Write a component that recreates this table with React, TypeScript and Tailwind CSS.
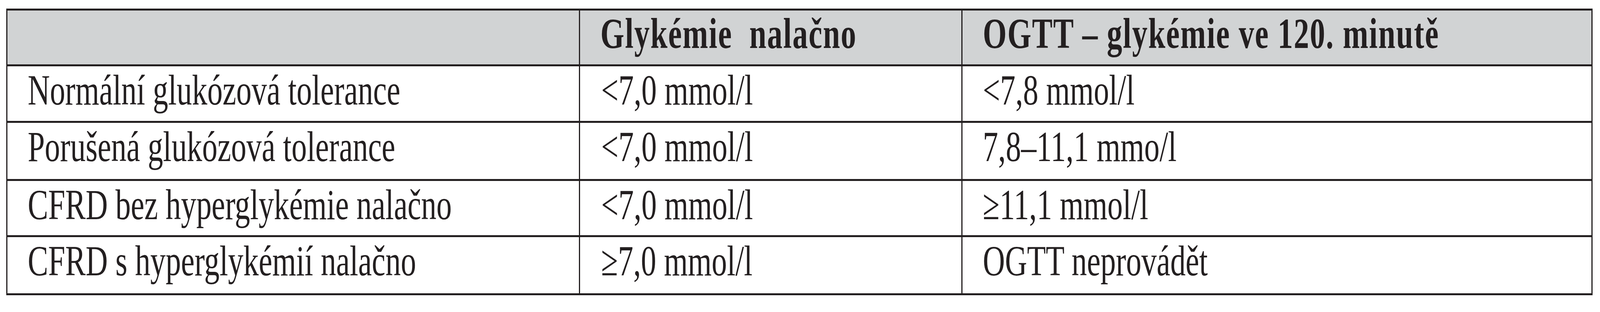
import React from "react";

interface Row {
  label: string;
  fasting: string;
  ogtt: string;
  height: string;
}

const rows: Row[] = [
  { label: "Normální glukózová tolerance", fasting: "<7,0 mmol/l", ogtt: "<7,8 mmol/l", height: "h-[145px]" },
  { label: "Porušená glukózová tolerance", fasting: "<7,0 mmol/l", ogtt: "7,8–11,1 mmo/l", height: "h-[149px]" },
  { label: "CFRD bez hyperglykémie nalačno", fasting: "<7,0 mmol/l", ogtt: "≥11,1 mmol/l", height: "h-[144px]" },
  { label: "CFRD s hyperglykémií nalačno", fasting: "≥7,0 mmol/l", ogtt: "OGTT neprovádět", height: "h-[149px]" },
];

const Text: React.FC<{ children: React.ReactNode }> = ({ children }) => (
  <span className="inline-block origin-left scale-x-[0.7066] whitespace-pre">{children}</span>
);

const App: React.FC = () => {
  return (
    <div className="min-h-[800px] w-full overflow-hidden bg-white pl-[16px] pt-[22px] font-['Liberation_Serif',serif] text-[111px] leading-none text-[#231f20]">
      <div className="w-[4061px] border-x-[3px] border-y-[5px] border-[#231f20]">
        <div className="grid h-[138px] grid-cols-[1463px_979px_1613px] bg-[#d1d3d4] font-bold tracking-[0.025em]">
          <div />
          <div className="border-l-[3px] border-[#231f20] pl-[52px] pt-[3px]">
            <Text>Glykémie  nalačno</Text>
          </div>
          <div className="border-l-[3px] border-[#231f20] pl-[52px] pt-[3px]">
            <Text>OGTT – glykémie ve 120. minutě</Text>
          </div>
        </div>

        {rows.map((row, index) => (
          <div
            key={index}
            className={`grid grid-cols-[1463px_979px_1613px] border-t-[5px] border-[#231f20] ${row.height}`}
          >
            <div className="pl-[52px] pt-[5px]">
              <Text>{row.label}</Text>
            </div>
            <div className="border-l-[3px] border-[#231f20] pl-[54px] pt-[5px]">
              <Text>{row.fasting}</Text>
            </div>
            <div className="border-l-[3px] border-[#231f20] pl-[52px] pt-[5px]">
              <Text>{row.ogtt}</Text>
            </div>
          </div>
        ))}
      </div>
    </div>
  );
};

export default App;
